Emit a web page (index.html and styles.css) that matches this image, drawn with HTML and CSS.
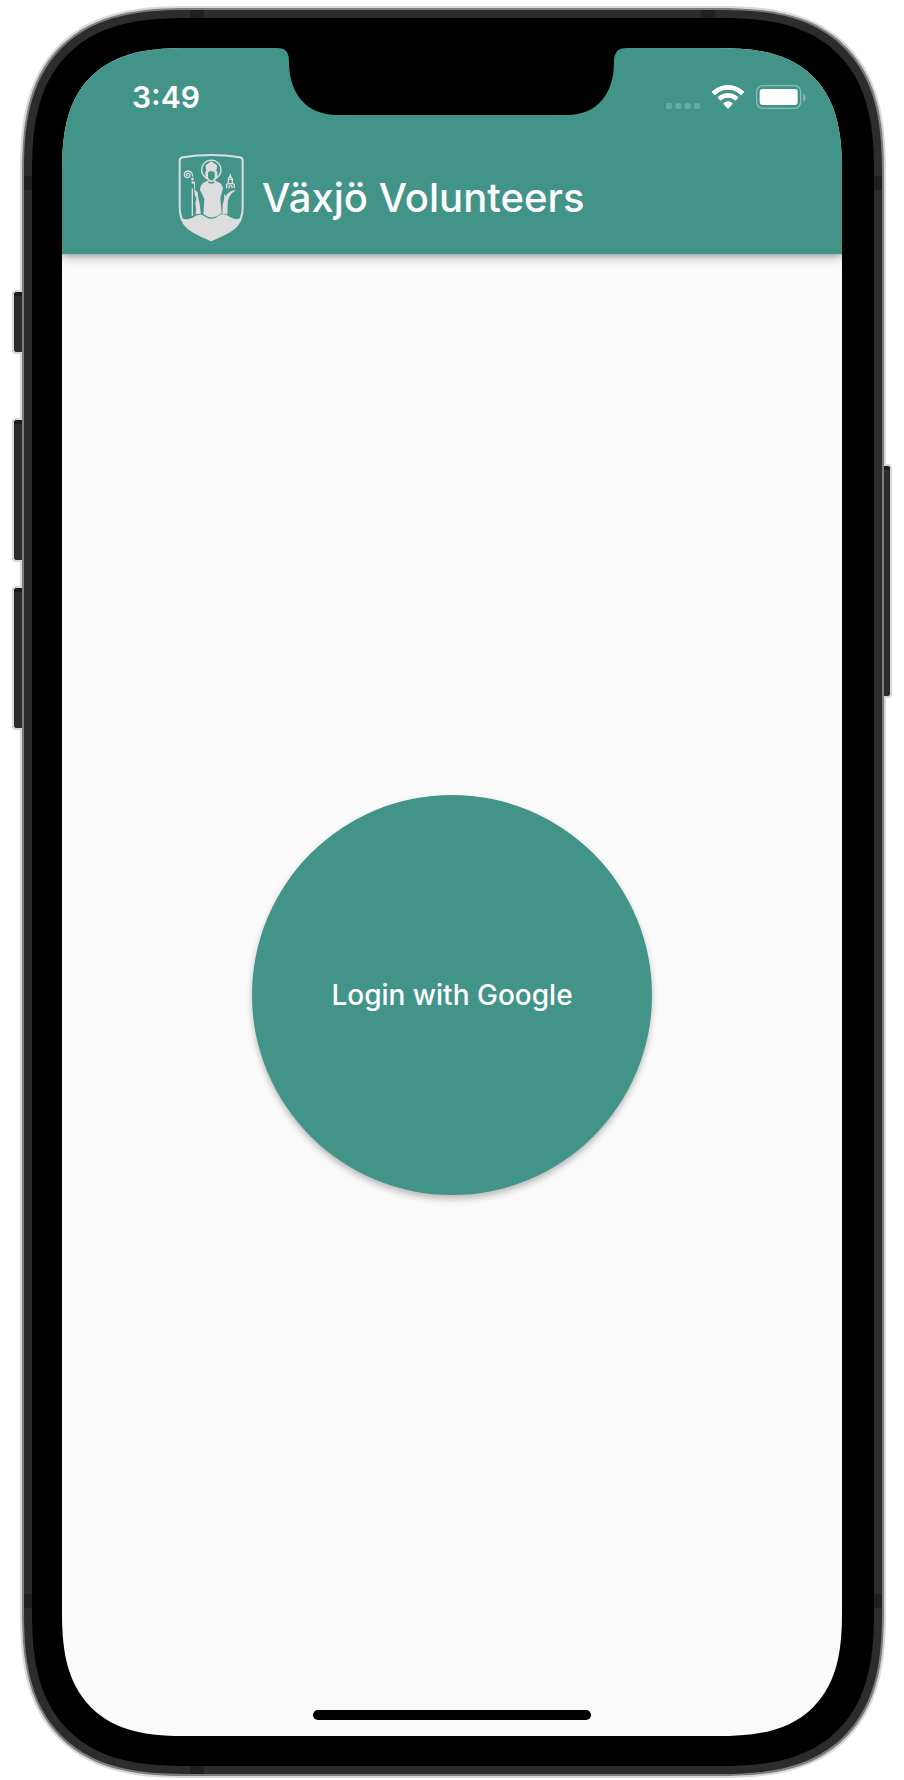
FILE: index.html
```html
<!DOCTYPE html>
<html lang="en">
<head>
<meta charset="utf-8">
<meta name="viewport" content="width=device-width, initial-scale=1">
<title>Växjö Volunteers</title>
<link rel="stylesheet" href="styles.css">
</head>
<body>
<div class="phone">
  <span class="key key-mute"></span>
  <span class="key key-up"></span>
  <span class="key key-down"></span>
  <span class="key key-power"></span>
  <div class="rim">
    <div class="bezel">
      <div class="screen">
        <header class="top">
          <div class="status">
            <time class="clock">3:49</time>
            <div class="indicators">
              <svg class="signal" viewBox="80 44 102 72" aria-hidden="true">
                <g fill="#5fada3"><rect x="80" y="98" width="18" height="18" rx="5"/><rect x="108" y="98" width="18" height="18" rx="5"/><rect x="136" y="98" width="18" height="18" rx="5"/><rect x="164" y="98" width="18" height="18" rx="5"/></g>
              </svg>
              <svg class="wifi" viewBox="216 44 96 72" aria-hidden="true">
                <g fill="#fff"><path d="M264 44C246 44 229 51 217 63Q215 65 217 67L223 73Q225 75 227 73C237 63 250 58 264 58S291 63 301 73Q303 75 305 73L311 67Q313 65 311 63C299 51 282 44 264 44Z"/><path d="M264 68C253 68 242 72 234 80Q232 82 234 84L240 90Q242 92 244 90C249 85 256 82 264 82S279 85 284 90Q286 92 288 90L294 84Q296 82 294 80C286 72 275 68 264 68Z"/><path d="M264 93C259 93 255 95 251 98Q249 100 251 102L262 114Q264 116 266 114L277 102Q279 100 277 98C273 95 269 93 264 93Z"/></g>
              </svg>
              <svg class="battery" viewBox="347 44 150 72" aria-hidden="true">
                <rect x="349" y="46" width="132" height="68" rx="18" fill="none" stroke="#86bdb5" stroke-width="4"/>
                <rect x="358" y="56" width="114" height="48" rx="9" fill="#fff"/>
                <path d="M489 70Q496 74 496 82T489 94Z" fill="#86bdb5"/>
              </svg>
            </div>
          </div>
          <div class="appbar">
            <svg class="crest" viewBox="24 30 198 264" role="img" aria-label="Växjö coat of arms">
              <path d="M29 50Q29 42 38 40Q80 33 123 33Q166 33 209 40Q218 42 218 50V190C218 219 211 237 193 252C173 269 149 276 123 289C98 276 74 269 54 252C36 237 29 219 29 190Z" fill="none" stroke="#ddd" stroke-width="6" stroke-linejoin="round"/>
              <g fill="#ddd">
                <path d="M34 222C52 230 62 224 78 215C95 207 102 217 113 222C121 226 129 225 137 221C149 213 157 207 171 214C184 222 195 230 213 222C205 244 190 255 165 268L128 289Q123 292 119 289L82 268C58 255 42 244 34 222Z"/>
                <path d="M109 80Q105 66 108 63L124 52L140 63Q143 66 139 80L142 83V103L135 108L138 112C151 116 156 122 159 133L151 161L155 208C147 213 141 217 134 219Q123 222 113 218L101 211Q99 208 101 202L103 165L90 137C91 124 97 116 111 112L114 108L106 103V83Z"/>
                <path d="M71 113H75V137L83 145C84 166 90 176 91 197L93 212Q86 207 77 212L78 194L76 178L79 162Q72 153 73 138Z"/>
                <path d="M200 139C182 146 173 163 173 180L172 212Q164 207 157 211L158 182L163 162Q162 153 162 149L167 156C176 143 187 138 200 139Z"/>
                <path d="M65 133H69V215L65 217ZM64 101H71V109H64ZM65 112H71V119H65Z"/>
              </g>
              <path d="M114 86Q115 82 124 82T134 86V100Q131 109 124 110Q116 108 114 100Z" fill="#439488"/>
              <path d="M115 113Q124 121 133 113" fill="none" stroke="#439488" stroke-width="4"/>
              <path d="M107 101A29 29 0 1 1 141 101" fill="none" stroke="#ddd" stroke-width="4"/>
              <path d="M68 98C69 84 58 79 49 82C40 86 41 99 51 101C60 102 63 89 55 88C49 87 48 95 53 95" fill="none" stroke="#ddd" stroke-width="4"/>
              <path d="M181 90V96L175 105V118L170 122V133M181 96L187 105V118L193 122V133M175 106H187M172 119H190M177 133V127Q181 121 186 127V133" fill="none" stroke="#ddd" stroke-width="4"/>
            </svg>
            <h1 class="title">Växjö Volunteers</h1>
          </div>
        </header>
        <main class="content">
          <button class="login" type="button">Login with Google</button>
        </main>
        <svg class="notch" viewBox="0 0 350 67" aria-hidden="true">
          <path d="M0 0C9 0 12 4 12 14C12 46 30 67 60 67H290C320 67 337 46 337 14C337 4 341 0 350 0Z"/>
        </svg>
        <span class="home"></span>
      </div>
    </div>
  </div>
  <span class="band band-h band-top-left"></span>
  <span class="band band-h band-top-right"></span>
  <span class="band band-h band-bottom"></span>
  <span class="band band-v band-left-top"></span>
  <span class="band band-v band-right-top"></span>
  <span class="band band-v band-left-bottom"></span>
  <span class="band band-v band-right-bottom"></span>
</div>
</body>
</html>
```
FILE: styles.css
```css
:root {
  --teal: #439488;
}

* {
  box-sizing: border-box;
}

body {
  display: flex;
  min-height: 100vh;
  margin: 0;
  padding: 6px 18px 2px 20px;
  background: #fff;
  font-family: Inter, "Liberation Sans", sans-serif;
}

.phone {
  position: relative;
  display: flex;
  flex: 1;
  border: 2px solid #d9d9d9;
  border-radius: 132px;
}

.rim {
  display: flex;
  flex: 1;
  padding: 8px;
  border: 2px solid #7d7d7d;
  border-radius: 130px;
  background: #2c2c2c;
}

.bezel {
  display: flex;
  flex: 1;
  padding: 30px 32px 30px 30px;
  border-radius: 122px;
  background: #000;
}

.screen {
  position: relative;
  display: flex;
  flex: 1;
  flex-direction: column;
  overflow: hidden;
  border-radius: 96px;
  background: #fafafa;
}

@supports (corner-shape: superellipse(1.4)) {
  .phone, .rim, .bezel, .screen { corner-shape: superellipse(1.4); }
  .phone { border-radius: 168px; }
  .rim { border-radius: 166px; }
  .bezel { border-radius: 156px; }
  .screen { border-radius: 125px; }
}

.top {
  background: var(--teal);
  box-shadow: 0 4px 10px rgba(0, 0, 0, 0.25), 0 2px 4px rgba(0, 0, 0, 0.15);
  color: #fff;
}

.status {
  display: flex;
  align-items: center;
  justify-content: space-between;
  height: 94px;
  padding: 4px 36px 0 70px;
}

.clock {
  font-size: 30px;
  font-weight: 600;
  line-height: 36px;
}

.indicators {
  display: flex;
  gap: 12px;
}

.signal { width: 34px; height: 24px; }
.wifi { width: 32px; height: 24px; }
.battery { width: 50px; height: 24px; }

.appbar {
  display: flex;
  align-items: center;
  gap: 18px;
  height: 112px;
  padding-left: 116px;
}

.crest {
  width: 66px;
  height: 88px;
}

.title {
  margin: 0;
  font-size: 40px;
  font-weight: 500;
  line-height: 48px;
}

.content {
  display: flex;
  flex: 1;
  align-items: center;
  justify-content: center;
}

.login {
  width: 400px;
  aspect-ratio: 1;
  padding: 0;
  border: 0;
  border-radius: 50%;
  background: var(--teal);
  box-shadow: 0 4px 6px rgba(0, 0, 0, 0.25);
  color: #fff;
  font: 500 28px/36px Inter, "Liberation Sans", sans-serif;
}

/* Hardware drawn over the screen and the frame */
.notch {
  position: absolute;
  top: 0;
  left: 50%;
  width: 350px;
  height: 67px;
  transform: translateX(-50%);
}

.home {
  position: absolute;
  bottom: 16px;
  left: 50%;
  width: 278px;
  height: 10px;
  border-radius: 5px;
  background: #000;
  transform: translateX(-50%);
}

.key {
  position: absolute;
  left: -10px;
  width: 10px;
  border: 2px solid #d9d9d9;
  border-right: 0;
  border-radius: 4px 0 0 4px;
  background: linear-gradient(#1c1c1c 4px, #2c2c2c 4px);
}

.key-mute { top: 282px; height: 64px; }
.key-up { top: 410px; height: 144px; }
.key-down { top: 578px; height: 144px; }

.key-power {
  top: 456px;
  right: -8px;
  left: auto;
  width: 8px;
  height: 234px;
  border-right: 2px solid #d9d9d9;
  border-left: 0;
  border-radius: 0 4px 4px 0;
}

.band {
  position: absolute;
  background: #1f1f1f;
}

.band-h { width: 14px; height: 8px; }
.band-v { width: 8px; height: 14px; }
.band-top-left { top: 2px; left: 168px; }
.band-top-right { top: 2px; right: 169px; }
.band-bottom { bottom: 2px; left: 168px; }
.band-left-top { top: 168px; left: 2px; }
.band-right-top { top: 168px; right: 2px; }
.band-left-bottom { bottom: 168px; left: 2px; }
.band-right-bottom { right: 2px; bottom: 168px; }
```
